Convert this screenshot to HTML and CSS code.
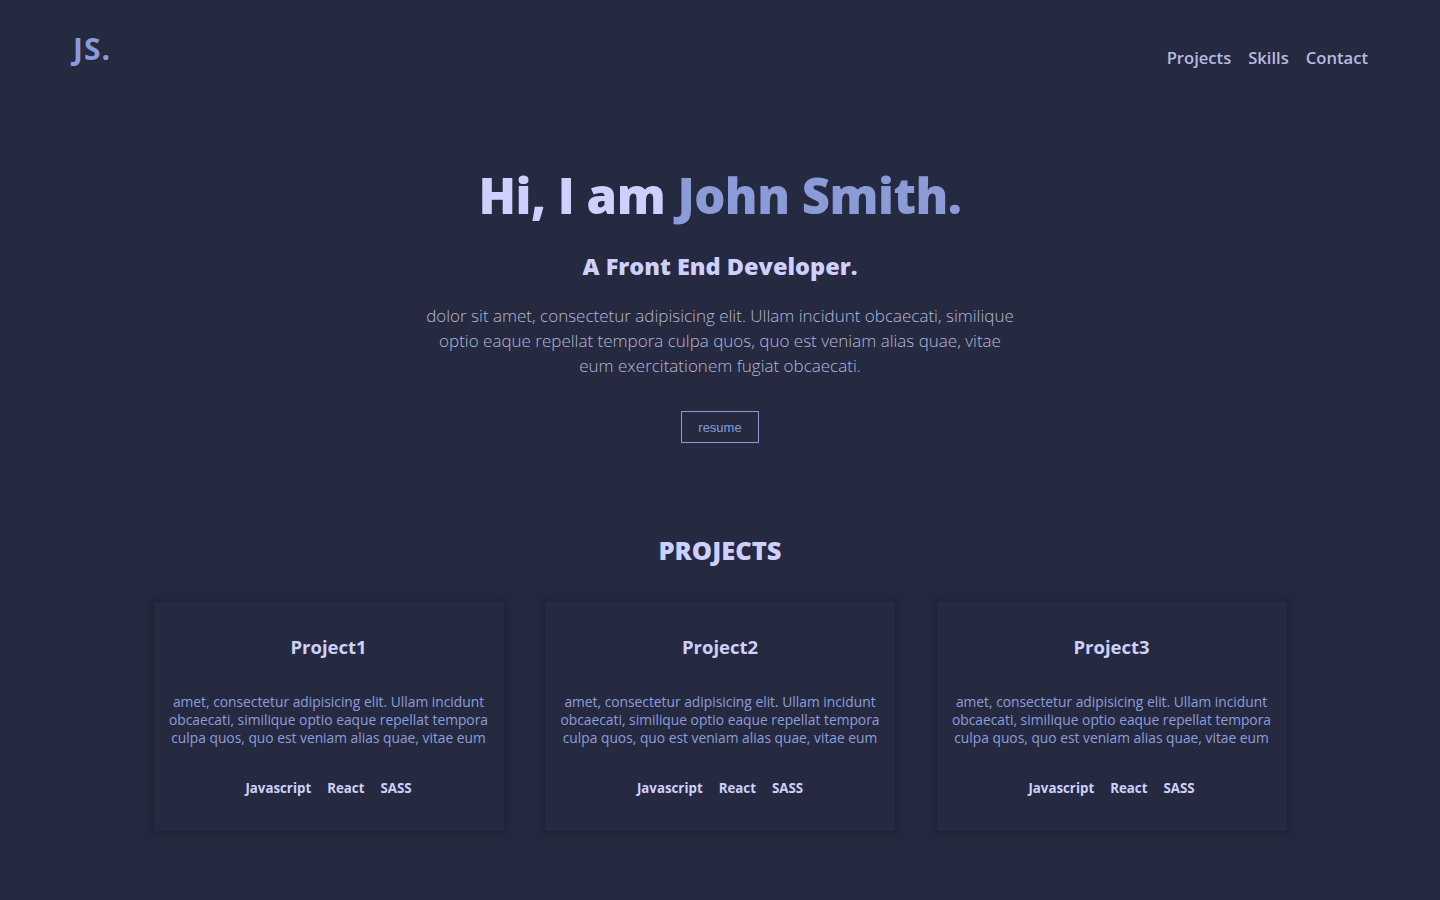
FILE: index.html
```html
<!DOCTYPE html>
<html lang="en">
<head>
<meta charset="utf-8">
<title>John Smith</title>
<link rel="stylesheet" href="styles.css">
</head>
<body>
<header class="header">
  <a class="logo" href="#">JS.</a>
  <nav class="nav">
    <a href="#projects">Projects</a>
    <a href="#skills">Skills</a>
    <a href="#contact">Contact</a>
  </nav>
</header>
<main>
  <section class="hero">
    <h1 class="hero-title">Hi, I am <span class="accent">John Smith.</span></h1>
    <h2 class="hero-sub">A Front End Developer.</h2>
    <p class="hero-text">dolor sit amet, consectetur adipisicing elit. Ullam incidunt obcaecati, similique optio eaque repellat tempora culpa quos, quo est veniam alias quae, vitae eum exercitationem fugiat obcaecati.</p>
    <button class="btn">resume</button>
  </section>
  <section class="projects" id="projects">
    <h2 class="section-title">PROJECTS</h2>
    <div class="cards">
      <article class="card">
        <h3 class="card-title">Project1</h3>
        <p class="card-text">amet, consectetur adipisicing elit. Ullam incidunt obcaecati, similique optio eaque repellat tempora culpa quos, quo est veniam alias quae, vitae eum</p>
        <ul class="tags"><li>Javascript</li><li>React</li><li>SASS</li></ul>
      </article>
      <article class="card">
        <h3 class="card-title">Project2</h3>
        <p class="card-text">amet, consectetur adipisicing elit. Ullam incidunt obcaecati, similique optio eaque repellat tempora culpa quos, quo est veniam alias quae, vitae eum</p>
        <ul class="tags"><li>Javascript</li><li>React</li><li>SASS</li></ul>
      </article>
      <article class="card">
        <h3 class="card-title">Project3</h3>
        <p class="card-text">amet, consectetur adipisicing elit. Ullam incidunt obcaecati, similique optio eaque repellat tempora culpa quos, quo est veniam alias quae, vitae eum</p>
        <ul class="tags"><li>Javascript</li><li>React</li><li>SASS</li></ul>
      </article>
    </div>
  </section>
</main>
</body>
</html>
```
FILE: styles.css
```css
* { box-sizing: border-box; }
html, body { margin: 0; padding: 0; }
body {
  background: #252a41;
  font-family: "Open Sans", "DejaVu Sans", sans-serif;
  color: #cfd0ff;
  min-height: 900px;
}
a { text-decoration: none; }
.header {
  display: flex;
  justify-content: space-between;
  align-items: flex-start;
  padding: 30px 72px 0 73px;
  height: 120px;
}
.logo {
  font-size: 30px;
  font-weight: 700;
  color: #8a9bd8;
  line-height: 38px;
  letter-spacing: 1px;
}
.nav {
  display: flex;
  gap: 17px;
  padding-top: 14px;
}
.nav a {
  color: #b8bade;
  font-size: 16.6px;
  font-weight: 600;
  line-height: 28px;
}
.hero {
  display: flex;
  flex-direction: column;
  align-items: center;
  text-align: center;
  padding-top: 40px;
}
.hero-title {
  margin: 0;
  font-size: 49px;
  font-weight: 800;
  line-height: 70px;
  color: #cfd0ff;
  letter-spacing: -0.5px;
}
.accent { color: #8a9bd8; }
.hero-sub {
  margin: 21px 0 0;
  font-size: 23.5px;
  font-weight: 800;
  line-height: 30px;
  color: #cfd0ff;
}
.hero-text {
  margin: 22px 0 0;
  max-width: 600px;
  font-size: 17px;
  font-weight: 300;
  line-height: 25px;
  color: #b5b7d6;
}
.btn {
  margin-top: 33px;
  width: 78px;
  height: 32px;
  background: transparent;
  border: 1px solid #8a9bd8;
  color: #8a9bd8;
  font-family: "Liberation Sans", Arial, sans-serif;
  font-size: 13px;
  cursor: pointer;
}
.projects {
  display: flex;
  flex-direction: column;
  align-items: center;
  padding-top: 89px;
}
.section-title {
  margin: 0;
  font-size: 25.5px;
  font-weight: 800;
  line-height: 36px;
  color: #cfd0ff;
}
.cards {
  display: grid;
  grid-template-columns: repeat(3, 350px);
  gap: 41.5px;
  margin-top: 34px;
}
.card {
  height: 229px;
  background: #252a41;
  box-shadow: 0 0 10px 2px rgba(20, 23, 36, 0.55);
  display: flex;
  flex-direction: column;
  align-items: center;
  text-align: center;
  padding: 31px 12px 0;
}
.card-title {
  margin: 0;
  font-size: 18.5px;
  font-weight: 700;
  line-height: 28px;
  color: #cfd0ff;
}
.card-text {
  margin: 32px 0 0;
  font-size: 13.8px;
  line-height: 18px;
  color: #8d9ddb;
}
.tags {
  list-style: none;
  display: flex;
  gap: 16px;
  margin: 33px 0 0;
  padding: 0;
}
.tags li {
  font-size: 13.3px;
  font-weight: 700;
  color: #cfd0ff;
  line-height: 16px;
}
```
